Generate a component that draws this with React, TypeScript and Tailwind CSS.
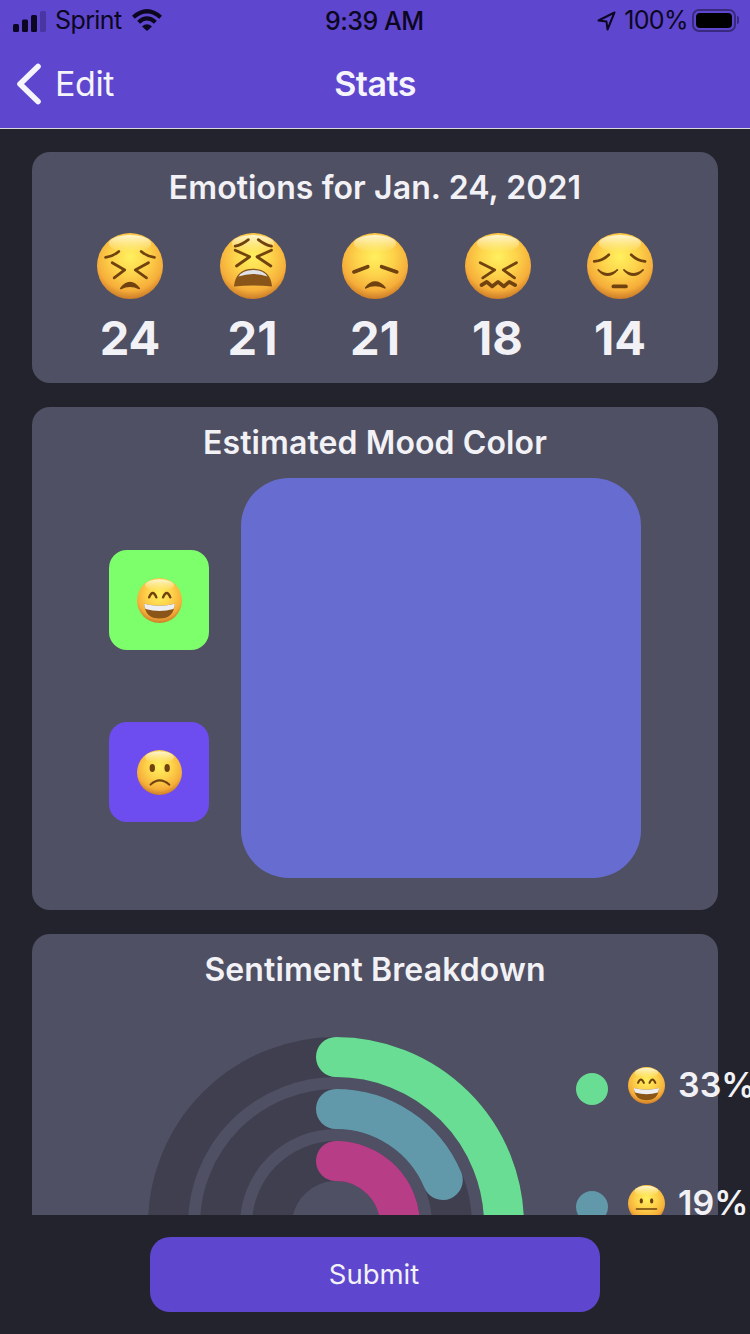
import React from "react";

const font = { fontFamily: "Inter, 'Noto Sans', sans-serif" };
const ink = "#6f4210";

function Emoji({ size, id, children }: { size: number; id: string; children: React.ReactNode }) {
  return (
    <svg width={size} height={size} viewBox="0 0 100 100" className="block shrink-0">
      <defs>
        <radialGradient id={id} cx="50%" cy="36%" r="64%">
          <stop offset="0%" stopColor="#fff05e" />
          <stop offset="45%" stopColor="#fdd24a" />
          <stop offset="80%" stopColor="#f6ae3a" />
          <stop offset="100%" stopColor="#cc7c28" />
        </radialGradient>
        <linearGradient id={id + "h"} x1="0" y1="0" x2="0" y2="1">
          <stop offset="0%" stopColor="#fffbe0" stopOpacity="0.9" />
          <stop offset="100%" stopColor="#fff8b0" stopOpacity="0" />
        </linearGradient>
      </defs>
      <circle cx="50" cy="50" r="50" fill={`url(#${id})`} />
      <ellipse cx="50" cy="16" rx="32" ry="13" fill={`url(#${id}h)`} />
      {children}
    </svg>
  );
}

const line = { fill: "none", stroke: ink, strokeLinecap: "round" as const, strokeLinejoin: "round" as const };

function Persevere({ size }: { size: number }) {
  return (
    <Emoji size={size} id="persevere">
      <path d="M13 37Q23 36 33 28M67 28Q77 36 87 37" {...line} strokeWidth="4.2" />
      <path d="M23 45L42 56L26 68M78 45L58 56L75 68" {...line} strokeWidth="4.2" />
      <path d="M36 84Q50 66 64 84Q50 77 36 84Z" fill={ink} stroke={ink} strokeWidth="2.6" strokeLinejoin="round" />
    </Emoji>
  );
}
function Weary({ size }: { size: number }) {
  return (
    <Emoji size={size} id="weary">
      <path d="M23 20Q33 18 43 10M58 10Q68 18 78 20" {...line} strokeWidth="4.2" />
      <path d="M23 26L45 36L25 50M78 26L56 36L77 50" {...line} strokeWidth="4.2" />
      <path d="M21 81Q24 54 50 54Q76 54 79 81Q50 78 21 81Z" fill="#8a5518" />
      <path d="M28 66Q34 56 50 56Q66 56 72 66Q50 58 28 66Z" fill="#dfe2e8" />
    </Emoji>
  );
}
function Disappointed({ size }: { size: number }) {
  return (
    <Emoji size={size} id="disappointed">
      <path d="M18 59L39 51M60 51L83 59" {...line} strokeWidth="5.6" />
      <path d="M36 83Q50 66 65 83Q50 76 36 83Z" fill={ink} stroke={ink} strokeWidth="2.6" strokeLinejoin="round" />
    </Emoji>
  );
}
function Confounded({ size }: { size: number }) {
  return (
    <Emoji size={size} id="confounded">
      <path d="M23 45L45 56L27 68M78 45L58 56L75 68" {...line} strokeWidth="4.2" />
      <path d="M25 79L33 74L41 81L50 74L59 81L67 74L76 79" {...line} strokeWidth="5.6" />
    </Emoji>
  );
}
function Pensive({ size }: { size: number }) {
  return (
    <Emoji size={size} id="pensive">
      <path d="M11 43Q24 42 33 33M67 33Q76 42 88 43" {...line} strokeWidth="4.2" />
      <path d="M17 56Q31 68 46 56Q31 72 17 56ZM56 56Q70 68 85 56Q70 72 56 56Z" fill={ink} stroke={ink} strokeWidth="2.6" strokeLinejoin="round" />
      <path d="M40 81H59" {...line} strokeWidth="5.6" />
    </Emoji>
  );
}
function Grin({ size, id }: { size: number; id: string }) {
  return (
    <Emoji size={size} id={id}>
      <path d="M27 43Q35 24 43 43M58 43Q66 24 74 43" {...line} strokeWidth="5.4" />
      <path d="M16 57Q50 66 84 57Q82 90 50 90Q18 90 16 57Z" fill="#8a5518" />
      <path d="M16 57Q50 66 84 57Q84 64 81 69Q50 78 19 69Q16 64 16 57Z" fill="#eceef2" />
    </Emoji>
  );
}
function Frown({ size }: { size: number }) {
  return (
    <Emoji size={size} id="frown">
      <ellipse cx="34" cy="40" rx="6" ry="9" fill={ink} />
      <ellipse cx="67" cy="40" rx="6" ry="9" fill={ink} />
      <path d="M30 77Q50 58 72 77" {...line} strokeWidth="4.4" />
    </Emoji>
  );
}
function Neutral({ size }: { size: number }) {
  return (
    <Emoji size={size} id="neutral">
      <ellipse cx="36" cy="43" rx="4.5" ry="7" fill={ink} />
      <ellipse cx="64" cy="43" rx="4.5" ry="7" fill={ink} />
      <path d="M23 65H77" {...line} strokeWidth="4.4" />
    </Emoji>
  );
}

function StatusBar() {
  return (
    <div className="relative flex h-[42px] items-center text-[25px] text-[#0b0720]">
      <svg width="33" height="21" viewBox="0 0 33 21" className="ml-[13px]">
        <rect x="0" y="13" width="6" height="8" rx="1.5" fill="#0b0720" />
        <rect x="9" y="8.5" width="6" height="12.5" rx="1.5" fill="#0b0720" />
        <rect x="18" y="4" width="6" height="17" rx="1.5" fill="#0b0720" />
        <rect x="27" y="0" width="6" height="21" rx="1.5" fill="#0b0720" opacity="0.25" />
      </svg>
      <span className="ml-[9px] tracking-[-0.6px]">Sprint</span>
      <svg width="30" height="22" viewBox="0 0 30 22" className="ml-[10px] -mt-[2px]">
        <path d="M1.4 8.2Q15 -3.8 28.6 8.2" fill="none" stroke="#0b0720" strokeWidth="4.2" />
        <path d="M6.6 13.2Q15 5.6 23.4 13.2" fill="none" stroke="#0b0720" strokeWidth="4.2" />
        <path d="M10 17.4L15 22L20 17.4Q15 13 10 17.4Z" fill="#0b0720" />
      </svg>
      <span className="absolute left-[325px] top-[6px] text-[25px] leading-[30px] font-medium tracking-[-0.5px]">9:39 AM</span>
      <div className="ml-auto flex items-center">
        <svg width="19" height="20" viewBox="0 0 19 20">
          <path d="M17.5 1.5L1.5 9.5L9.5 10.5L10.5 18.5Z" fill="none" stroke="#0b0720" strokeWidth="2" strokeLinejoin="round" />
        </svg>
        <span className="ml-[8px] tracking-[-0.6px]">100%</span>
        <div className="-mt-[2px] ml-[4px] mr-[11px] flex items-center">
          <div className="h-[23px] w-[44px] rounded-[7px] border-2 border-[#0b0720]/45 p-[2px]">
            <div className="h-full w-full rounded-[4px] bg-black" />
          </div>
          <div className="ml-[1px] h-[8px] w-[2px] rounded-r-sm bg-[#0b0720]/45" />
        </div>
      </div>
    </div>
  );
}

function NavBar() {
  return (
    <div className="relative flex h-[86px] items-center pb-[3px] text-[#f5f4fb]">
      <svg width="26" height="42" viewBox="0 0 26 42" className="ml-[16px]">
        <path d="M22 3.5L4 21L22 38.5" fill="none" stroke="#f5f4fb" strokeWidth="5.6" strokeLinecap="round" strokeLinejoin="round" />
      </svg>
      <span className="ml-[13px] text-[34px] leading-[40px] tracking-[-0.4px]">Edit</span>
      <span className="absolute inset-x-0 top-[22px] text-center text-[34px] leading-[40px] font-semibold tracking-[-0.5px]">Stats</span>
    </div>
  );
}

function EmotionCol({ icon, value }: { icon: React.ReactNode; value: string }) {
  return (
    <div className="flex w-[122.5px] flex-col items-center">
      {icon}
      <span className="mt-[14px] text-[47px] leading-[50px] font-bold text-[#f2f2f6]">{value}</span>
    </div>
  );
}

function Title({ children }: { children: React.ReactNode }) {
  return <h2 className="text-center text-[32px] leading-[36px] font-semibold tracking-[0.1px] text-[#f2f2f6]">{children}</h2>;
}

function Legend({ color, value, icon }: { color: string; value: string; icon: React.ReactNode }) {
  return (
    <div className="flex h-[36px] items-center whitespace-nowrap">
      <div className="mt-[8px] h-[32px] w-[32px] shrink-0 rounded-full" style={{ backgroundColor: color }} />
      <div className="ml-[20px]">{icon}</div>
      <span className="ml-[13px] text-[34px] leading-[36px] font-semibold text-[#f2f2f6]">{value}</span>
    </div>
  );
}

function Chart() {
  return (
    <svg width="376" height="376" viewBox="0 0 376 376" className="block shrink-0">
      <g fill="none" strokeWidth="40">
        <circle cx="188" cy="188" r="168" stroke="#403f50" />
        <circle cx="188" cy="188" r="116" stroke="#403f50" />
        <circle cx="188" cy="188" r="64" stroke="#403f50" />
      </g>
      <g fill="none" strokeWidth="40" strokeLinecap="round">
        <path d="M188 20A168 168 0 0 1 356 188" stroke="#69dd93" />
        <path d="M188 72A116 116 0 0 1 294.8 143" stroke="#6299aa" />
        <path d="M188 124A64 64 0 0 1 252 188" stroke="#b83d87" />
      </g>
    </svg>
  );
}

export default function App() {
  return (
    <div className="flex h-[1334px] w-[750px] flex-col overflow-hidden bg-[#23232d]" style={font}>
      <header className="h-[129px] shrink-0 border-b border-[#d9d9e0] bg-[#5f46ce]">
        <StatusBar />
        <NavBar />
      </header>

      <main className="flex h-[1086px] shrink-0 flex-col gap-[24px] overflow-hidden px-[32px] pt-[23px]">
        <section className="h-[231px] shrink-0 rounded-[18px] bg-[#4f5064] pt-[18px]">
          <Title>Emotions for Jan. 24, 2021</Title>
          <div className="mt-[27px] flex justify-center">
            <EmotionCol icon={<Persevere size={66} />} value="24" />
            <EmotionCol icon={<Weary size={66} />} value="21" />
            <EmotionCol icon={<Disappointed size={66} />} value="21" />
            <EmotionCol icon={<Confounded size={66} />} value="18" />
            <EmotionCol icon={<Pensive size={66} />} value="14" />
          </div>
        </section>

        <section className="h-[503px] shrink-0 rounded-[18px] bg-[#4f5064] pt-[18px]">
          <Title>Estimated Mood Color</Title>
          <div className="mt-[17px] flex items-start pl-[77px]">
            <div className="mt-[72px] flex flex-col gap-[72px]">
              <div className="flex h-[100px] w-[100px] items-center justify-center rounded-[18px] bg-[#7cff6b]">
                <Grin size={45} id="grin-a" />
              </div>
              <div className="flex h-[100px] w-[100px] items-center justify-center rounded-[18px] bg-[#6e4df0]">
                <Frown size={45} />
              </div>
            </div>
            <div className="ml-[32px] h-[400px] w-[400px] rounded-[48px] bg-[#676dd0]" />
          </div>
        </section>

        <section className="shrink-0 rounded-[18px] bg-[#4f5064] pt-[18px] pb-[24px]">
          <Title>Sentiment Breakdown</Title>
          <div className="mt-[49px] flex items-start pl-[116px]">
            <Chart />
            <div className="ml-[52px] mt-[30px] flex flex-col gap-[82px]">
              <Legend color="#69dd93" value="33%" icon={<Grin size={37} id="grin-b" />} />
              <Legend color="#6299aa" value="19%" icon={<Neutral size={37} />} />
            </div>
          </div>
        </section>
      </main>

      <footer className="flex flex-1 justify-center pt-[22px]">
        <button className="h-[75px] w-[450px] rounded-[20px] bg-[#5f46ce] pr-[2px] text-[27.5px] text-[#f2f2f6]">Submit</button>
      </footer>
    </div>
  );
}
